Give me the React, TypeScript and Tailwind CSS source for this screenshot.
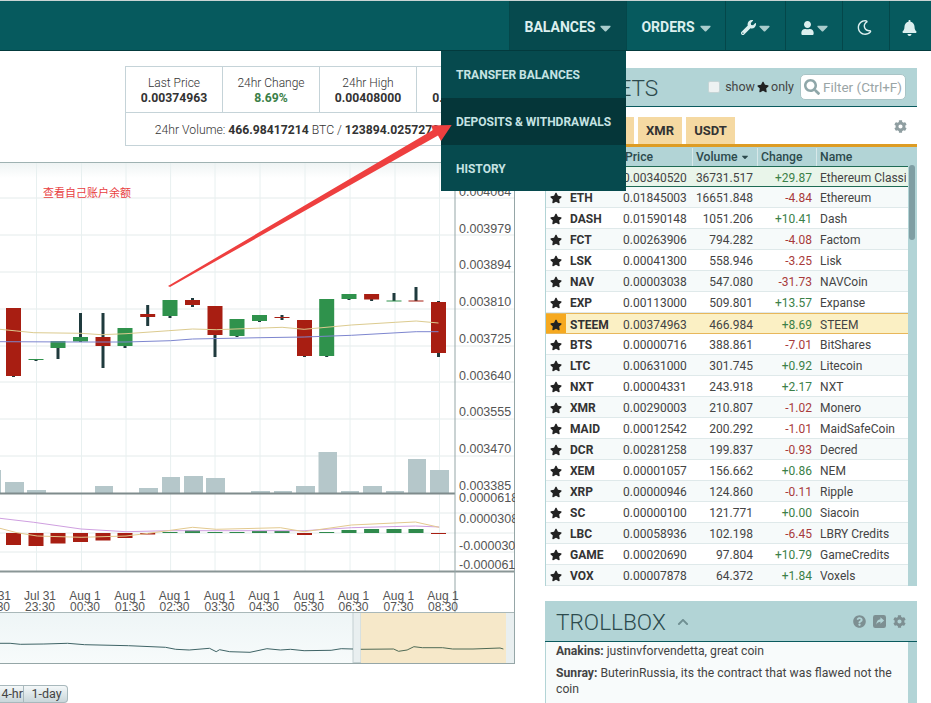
import React from "react";
import {
  FaBell,
  FaCaretDown,
  FaChevronUp,
  FaCog,
  FaQuestionCircle,
  FaRegMoon,
  FaSearch,
  FaStar,
  FaUser,
  FaWrench,
} from "react-icons/fa";

const markets = [
  ["ETC", "0.00340520", "36731.517", "+29.87", "Ethereum Classic"],
  ["ETH", "0.01845003", "16651.848", "-4.84", "Ethereum"],
  ["DASH", "0.01590148", "1051.206", "+10.41", "Dash"],
  ["FCT", "0.00263906", "794.282", "-4.08", "Factom"],
  ["LSK", "0.00041300", "558.946", "-3.25", "Lisk"],
  ["NAV", "0.00003038", "547.080", "-31.73", "NAVCoin"],
  ["EXP", "0.00113000", "509.801", "+13.57", "Expanse"],
  ["STEEM", "0.00374963", "466.984", "+8.69", "STEEM"],
  ["BTS", "0.00000716", "388.861", "-7.01", "BitShares"],
  ["LTC", "0.00631000", "301.745", "+0.92", "Litecoin"],
  ["NXT", "0.00004331", "243.918", "+2.17", "NXT"],
  ["XMR", "0.00290003", "210.807", "-1.02", "Monero"],
  ["MAID", "0.00012542", "200.292", "-1.01", "MaidSafeCoin"],
  ["DCR", "0.00281258", "199.837", "-0.93", "Decred"],
  ["XEM", "0.00001057", "156.662", "+0.86", "NEM"],
  ["XRP", "0.00000946", "124.860", "-0.11", "Ripple"],
  ["SC", "0.00000100", "121.771", "+0.00", "Siacoin"],
  ["LBC", "0.00058936", "102.198", "-6.45", "LBRY Credits"],
  ["GAME", "0.00020690", "97.804", "+10.79", "GameCredits"],
  ["VOX", "0.00007878", "64.372", "+1.84", "Voxels"],
];

// x, bodyTop, bodyBottom, wickTop, wickBottom, up
const candles: [number, number, number, number, number, boolean][] = [
  [13.5, 308, 376, 308, 377, false],
  [36, 359, 360, 359, 361, true],
  [58, 341, 348, 341, 359, true],
  [80.5, 337, 341.5, 313, 342, true],
  [103, 337, 346, 313, 368, false],
  [125, 328, 346, 328, 348, true],
  [147.7, 314, 317, 305, 326, false],
  [170, 300, 316, 300, 318, true],
  [192.5, 300, 305, 298, 307, false],
  [215, 306, 335, 306, 357, false],
  [237, 319, 336, 319, 337, true],
  [259.5, 315, 321, 315, 322, true],
  [282, 317, 318, 315, 320, false],
  [304.5, 320, 356, 320, 357, false],
  [326.7, 299, 356, 299, 357, true],
  [349, 294, 299, 294, 300, true],
  [371.6, 294, 299.5, 294, 301, false],
  [394, 300.5, 301.5, 293, 301, true],
  [416, 300.5, 301.5, 287, 301, false],
  [438.5, 302, 353, 301, 357, false],
];

// left, right, top
const volumes = [
  [-16, 1, 470],
  [5, 24, 482],
  [27, 46, 490],
  [95, 113, 486],
  [139, 158, 488],
  [162, 180, 477],
  [184, 203, 476],
  [206, 225, 478],
  [251, 270, 491],
  [274, 292, 491],
  [296, 315, 486],
  [318.5, 337, 452],
  [341, 359, 491],
  [363, 382, 486],
  [386, 404, 491],
  [408, 426, 459],
  [430, 449, 470],
];

// centre x, top, bottom, up
const macd: [number, number, number, boolean][] = [
  [13.5, 533, 545, false],
  [36, 533, 546, false],
  [58, 533, 543.5, false],
  [80.5, 533, 542, false],
  [103, 533, 540.5, false],
  [125, 533, 538, false],
  [147.7, 533, 534.5, false],
  [170, 532, 533, true],
  [192.5, 530, 533, true],
  [215, 532, 533, true],
  [237, 532, 533, true],
  [259.5, 531, 533, true],
  [282, 531, 533, true],
  [304.5, 533, 535, false],
  [326.7, 532, 533, true],
  [349, 530, 533, true],
  [371.6, 529, 533, true],
  [394, 529, 533, true],
  [416, 529, 533, true],
  [438.5, 533, 534, false],
];

const toChart = (pts: number[][], base: number) =>
  pts.map(([x, y]) => `${(x / 2.96).toFixed(1)},${(base + y / 3).toFixed(1)}`).join(" ");

const tanLine = toChart(
  [[0, 148], [50, 153], [100, 158], [240, 160], [300, 164], [373, 161], [500, 152], [570, 147], [640, 149], [835, 142], [900, 148], [1040, 135], [1170, 127], [1232, 123], [1298, 129]],
  280,
);
const blueLine = toChart(
  [[0, 185], [240, 186], [373, 186], [505, 182], [570, 177], [770, 173], [900, 171], [1040, 166], [1232, 155], [1298, 155]],
  280,
);
const macdPurple = toChart(
  [[0, 115], [100, 127], [240, 147], [373, 155], [500, 152], [900, 152], [1040, 143], [1230, 138], [1300, 141]],
  480,
);
const macdTan = toChart(
  [[0, 145], [50, 158], [110, 168], [240, 172], [373, 168], [440, 160], [570, 142], [640, 148], [830, 143], [900, 155], [1040, 135], [1230, 126], [1300, 142]],
  480,
);
const navLeft = toChart(
  [[0, 490], [30, 490], [60, 493], [130, 492], [200, 490], [250, 494], [380, 497], [490, 502], [520, 508], [560, 510], [620, 505], [640, 515], [650, 509], [680, 515], [740, 517], [790, 506], [830, 510], [860, 508], [900, 512], [980, 511], [1010, 506], [1045, 507]],
  480,
);
const navRight = toChart(
  [[1068, 508], [1165, 507], [1180, 514], [1205, 510], [1225, 500], [1250, 503], [1310, 503], [1340, 507], [1400, 507], [1480, 504], [1490, 507]],
  480,
);

const gridY = [198, 235, 272, 309, 346, 382, 419, 456, 513, 533, 552];
const gridX = [36.5, 81.5, 126, 170.6, 215, 260, 305, 350, 395, 439.5];
const priceLabels = ["0.004064", "0.003979", "0.003894", "0.003810", "0.003725", "0.003640", "0.003555", "0.003470", "0.003385"];
const timeLabels = [
  [-5, "Jul 31", "22:30"],
  [40, "Jul 31", "23:30"],
  [85, "Aug 1", "00:30"],
  [130, "Aug 1", "01:30"],
  [174.5, "Aug 1", "02:30"],
  [219.5, "Aug 1", "03:30"],
  [264, "Aug 1", "04:30"],
  [309, "Aug 1", "05:30"],
  [353.5, "Aug 1", "06:30"],
  [398.5, "Aug 1", "07:30"],
  [443, "Aug 1", "08:30"],
];

function Chart() {
  return (
    <svg width="515" height="502" viewBox="0 162 515 502" className="block">
      <defs>
        <linearGradient id="topFade" x1="0" y1="0" x2="0" y2="1">
          <stop offset="0" stopColor="#eef3f3" />
          <stop offset="1" stopColor="#ffffff" />
        </linearGradient>
        <linearGradient id="navBg" x1="0" y1="0" x2="0" y2="1">
          <stop offset="0" stopColor="#eef5f6" />
          <stop offset="1" stopColor="#f7fbfb" />
        </linearGradient>
      </defs>
      <rect x="0" y="162" width="455" height="16" fill="url(#topFade)" />
      {gridY.map((y) => (
        <line key={y} x1="0" x2="514" y1={y} y2={y} stroke="#e4ebeb" />
      ))}
      {gridX.map((x) => (
        <line key={x} x1={x} x2={x} y1="163" y2="572" stroke="#e8f0f0" />
      ))}
      <line x1="0" x2="514" y1="162.5" y2="162.5" stroke="#9fb2b2" />

      <text x="43" y="197" fontSize="11" fill="#e8403f" fontFamily="'Noto Sans CJK SC', sans-serif">
        查看自己账户余额
      </text>

      {volumes.map(([a, b, top]) => (
        <rect key={a} x={a} y={top} width={b - a} height={493 - top} fill="#b5c7ca" />
      ))}

      {candles.map(([x, top, bottom, wt, wb, up]) => (
        <g key={x}>
          <rect x={x - 1.5} y={wt} width="3" height={wb - wt} fill="#1f3a3d" />
          <rect x={x - 7.5} y={top} width="15" height={bottom - top} fill={up ? "#2f924c" : "#a81e12"} />
        </g>
      ))}
      <polyline points={tanLine} fill="none" stroke="#dccb8f" strokeWidth="1" />
      <polyline points={blueLine} fill="none" stroke="#7d86cf" strokeWidth="1" />

      {macd.map(([x, top, bottom, up]) => (
        <rect key={x} x={x - 7.5} y={top} width="15" height={bottom - top} fill={up ? "#2f8a4c" : "#a81e12"} />
      ))}
      <polyline points={macdPurple} fill="none" stroke="#cf9fe0" strokeWidth="1" />
      <polyline points={macdTan} fill="none" stroke="#e3c98f" strokeWidth="1" />

      <line x1="0" x2="455" y1="493.5" y2="493.5" stroke="#7f8b8c" strokeWidth="2" />
      <line x1="0" x2="514" y1="571.5" y2="571.5" stroke="#8a9696" strokeWidth="2" />
      <line x1="455" x2="455" y1="163" y2="612" stroke="#95a6a7" />
      <line x1="514.5" x2="514.5" y1="163" y2="664" stroke="#95a6a7" />

      <g fill="#555" fontSize="12.5" fontFamily="'Liberation Sans', sans-serif">
        {priceLabels.map((t, i) => (
          <text key={t} x="459" y={196 + i * 36.7}>
            {t}
          </text>
        ))}
        <text x="459" y="502">0.0000618</text>
        <text x="459" y="523">0.0000308</text>
        <text x="459" y="550">-0.000030</text>
        <text x="459" y="569">-0.000061</text>
      </g>

      <g fill="#555" fontSize="12" fontFamily="'Liberation Sans', sans-serif" textAnchor="middle">
        {timeLabels.map(([x, a, b]) => (
          <g key={b as string}>
            <text x={x as number} y="600">{a}</text>
            <text x={x as number} y="611">{b}</text>
          </g>
        ))}
      </g>

      <rect x="0" y="612" width="514" height="51" fill="url(#navBg)" />
      <rect x="353" y="612.5" width="8" height="50" fill="#e9eff0" stroke="#c4d0d1" />
      <rect x="361" y="613" width="145" height="50" fill="#f6e8c9" />
      <rect x="506" y="613" width="8" height="50" fill="#e9eff0" />
      <polyline points={navLeft} fill="none" stroke="#3f6466" strokeWidth="1" />
      <polyline points={navRight} fill="none" stroke="#4f6a55" strokeWidth="1" />
      <line x1="0" x2="514" y1="612.5" y2="612.5" stroke="#a9b8b9" />
      <line x1="0" x2="514" y1="663.5" y2="663.5" stroke="#95a6a7" />
    </svg>
  );
}

function Caret() {
  return <FaCaretDown className="h-[18px] w-[11px] text-[#a9cccc]" />;
}

function Stat({ label, value, color = "text-[#333]" }: any) {
  return (
    <div className="w-[97px] shrink-0 border-r border-[#c5d3d8] pt-[9px] text-center last:border-r-0">
      <div className="text-[12px] font-light leading-[14px] text-[#333]">{label}</div>
      <div className={`text-[12.2px] font-bold leading-[17px] ${color}`}>{value}</div>
    </div>
  );
}

function NavItem({ children, className = "" }: any) {
  return (
    <div className={`flex h-full items-center justify-center border-l border-[#04474a] pt-[4px] font-bold text-[#dcefef] ${className}`}>
      {children}
    </div>
  );
}

function MarketRow({ row, index }: any) {
  const [sym, price, vol, change, name] = row;
  const isSteem = sym === "STEEM";
  const isFirst = index === 0;
  const rowBg = isSteem
    ? "bg-[#fbf0c4] border-y border-[#e8b75a]"
    : isFirst
      ? "bg-[#e9f5ea] border-y border-[#1f6b55]"
      : index % 2 === 1
        ? "bg-[#f6fafa] border-b border-[#dfe9ea]"
        : "bg-white border-b border-[#dfe9ea]";
  return (
    <div className={`flex h-[21px] items-center text-[12px] text-[#444] ${rowBg}`}>
      <div className={`flex h-full w-[20px] items-center justify-center pr-[1px] pt-[2px] ${isSteem ? "bg-[#f6a91f]" : ""}`}>
        <FaStar className="h-[12px] w-[12px] text-[#222]" />
      </div>
      <div className="w-[57px] pl-[4px] pt-[2px] font-bold text-[#333]">{sym}</div>
      <div className="w-[66px] pt-[2px]">{price}</div>
      <div className="w-[64px] pt-[2px] text-right">{vol}</div>
      <div className={`w-[59px] pt-[2px] text-right ${change.startsWith("+") ? "text-[#3b8048]" : "text-[#a83a3a]"}`}>
        {change}
      </div>
      <div className="ml-[8px] mr-[2px] min-w-0 flex-1 overflow-hidden whitespace-nowrap pt-[2px]">{name}</div>
    </div>
  );
}

export default function App() {
  return (
    <div className="relative h-[703px] w-[931px] overflow-hidden bg-white font-['Roboto',sans-serif] text-[#333]">
      <header className="flex h-[51px] justify-end border-y border-t-[#c9d4d4] border-b-[#033a3d] bg-[#065a5e] text-[14px]">
        <NavItem className="w-[117px] gap-[5px] bg-[#064a4e]">
          BALANCES <Caret />
        </NavItem>
        <NavItem className="w-[99px] gap-[5px]">
          ORDERS <Caret />
        </NavItem>
        <NavItem className="w-[60px] gap-[3px]">
          <FaWrench className="h-[15px] w-[15px]" /> <Caret />
        </NavItem>
        <NavItem className="w-[57px] gap-[3px]">
          <FaUser className="h-[14px] w-[13px]" /> <Caret />
        </NavItem>
        <NavItem className="w-[47px] pr-[3px]">
          <FaRegMoon className="h-[15px] w-[15px]" />
        </NavItem>
        <NavItem className="w-[42px] pr-[3px]">
          <FaBell className="h-[16px] w-[15px]" />
        </NavItem>
      </header>

      <main className="flex">
        <section className="w-[515px] shrink-0">
          <div className="ml-[125px] mt-[15px] w-[389px] border border-[#c5d3d8]">
            <div className="flex h-[46px] border-b border-[#c5d3d8]">
              <Stat label="Last Price" value="0.00374963" />
              <Stat label="24hr Change" value="8.69%" color="text-[#3b8048]" />
              <Stat label="24hr High" value="0.00408000" />
              <Stat label="24hr Low" value="0.00346410" />
            </div>
            <div className="flex h-[32px] items-center justify-center whitespace-nowrap pl-[4px] pt-[3px] text-[12.2px] font-light">
              24hr Volume:&nbsp;<b className="font-bold">466.98417214</b>&nbsp;BTC /&nbsp;
              <b className="font-bold">123894.02572703</b>&nbsp;STEEM
            </div>
          </div>
          <div className="mt-[16px]">
            <Chart />
          </div>
          <div className="mt-[21px] flex h-[18px] w-[68px] overflow-hidden rounded-r-[4px] border border-[#a8b8bc] border-l-0 bg-gradient-to-b from-[#f4f8f9] to-[#c9d6da] text-[12.5px] leading-[16px] text-[#444]">
            <div className="w-[24px] shrink-0 border-r border-[#a8b8bc] text-right">4-hr</div>
            <div className="flex-1 pl-[2px] text-center">1-day</div>
          </div>
        </section>

        <aside className="ml-[30px] mt-[17px] w-[372px] shrink-0">
          <div className="bg-[#b2d4d6]">
            <div className="flex h-[39px] items-center border-b border-[#0a5a5e]">
              <h2 className="ml-[11px] pt-[3px] text-[22.6px] font-light text-[#2c4a4d]">MARKETS</h2>
              <label className="ml-auto flex items-center gap-[2px] text-[12.5px] text-[#444]">
                <span className="mr-[3px] h-[12px] w-[12px] rounded-[2px] border border-[#c5d5d6] bg-[#eef2f2]" />
                show <FaStar className="h-[12px] w-[12px] text-[#222]" /> only
              </label>
              <div className="ml-[6px] mr-[11px] flex h-[26px] w-[106px] items-center gap-[3px] rounded-[5px] border border-[#a9c4c6] bg-white pl-[3px] text-[13.5px] text-[#9aa5a6]">
                <FaSearch className="h-[16px] w-[16px] text-[#8fa7a9]" /> Filter (Ctrl+F)
              </div>
            </div>
            <div className="ml-px flex h-[40px] items-end gap-[4px] border-b-[3px] border-[#dd9c24] bg-white pl-[2px]">
              {["BTC", "ETH", "XMR", "USDT"].map((t) => (
                <div
                  key={t}
                  className={`flex h-[27px] items-center justify-center bg-[#f5d9a2] text-[13px] font-bold text-[#333] ${
                    t === "USDT" ? "w-[49px]" : t === "BTC" ? "w-[38px]" : "w-[44px]"
                  }`}
                >
                  {t}
                </div>
              ))}
              <FaCog className="mb-[11px] ml-auto mr-[10px] h-[13px] w-[13px] text-[#8f9ea1]" />
            </div>
            <div className="flex">
              <div className="ml-px w-[362px]">
                <div className="flex h-[19px] items-center pt-[1px] text-[12.2px] font-medium text-[#2c4a4d]">
                  <div className="w-[76px]" />
                  <div className="h-full w-[70px] pl-[3px] leading-[19px]">Price</div>
                  <div className="flex h-full w-[65px] items-center gap-[3px] border-l border-[#d7e8e9] pl-[3px]">
                    Volume <FaCaretDown className="h-[10px] w-[8px]" />
                  </div>
                  <div className="h-full w-[59px] border-l border-[#d7e8e9] pl-[3px] leading-[19px]">Change</div>
                  <div className="h-full flex-1 border-l border-[#d7e8e9] pl-[3px] leading-[19px]">Name</div>
                </div>
                {markets.map((row, i) => (
                  <MarketRow key={row[0]} row={row} index={i} />
                ))}
              </div>
              <div className="ml-px flex-1 pt-[18px]">
                <div className="h-[75px] w-[6px] rounded-[3px] bg-[#7f9ea3]" />
              </div>
            </div>
          </div>

          <div className="mt-[15px] bg-[#b2d4d6]">
            <div className="flex h-[41px] items-center border-b border-[#0a5a5e] pl-[11px] pr-[11px]">
              <h2 className="pt-[3px] text-[22.6px] font-light text-[#2c4a4d]">TROLLBOX</h2>
              <FaChevronUp className="ml-[11px] mt-[1px] h-[12px] w-[12px] text-[#6f8f92]" />
              <FaQuestionCircle className="ml-auto h-[13px] w-[13px] text-[#7d8f92]" />
              <svg viewBox="0 0 14 14" className="ml-[7px] h-[13px] w-[13px]">
                <rect width="14" height="14" rx="2.5" fill="#7d8f92" />
                <path d="M8 2.5 12 6 8 9.5V7.4C6 7.4 4.6 8.2 3.6 10.4 3.6 7 5.2 4.9 8 4.6Z" fill="#b2d4d6" />
              </svg>
              <FaCog className="ml-[7px] h-[13px] w-[13px] text-[#7d8f92]" />
            </div>
            <div className="ml-px w-[362px] bg-[#f8fbfb] px-[10px] text-[12.2px] leading-[16px] text-[#444]">
              <p className="pt-[1px]">
                <b className="font-bold">Anakins:</b> justinvforvendetta, great coin
              </p>
              <p className="mt-[6px] h-[60px]">
                <b className="font-bold">Sunray:</b> ButerinRussia, its the contract that was flawed not the coin
              </p>
            </div>
          </div>
        </aside>
      </main>

      <div className="absolute left-[441px] top-[51px] w-[185px] bg-[#064a4e] text-[12px] font-bold text-[#c5e3e3]">
        <div className="flex h-[47px] items-center pl-[15px]">TRANSFER BALANCES</div>
        <div className="flex h-[47px] items-center bg-[#053639] pl-[15px]">DEPOSITS &amp; WITHDRAWALS</div>
        <div className="flex h-[46px] items-center pl-[15px] pt-[2px]">HISTORY</div>
      </div>

      <svg className="absolute left-0 top-0" width="931" height="703" viewBox="0 0 931 703">
        <polygon points="168,286 433,130 431,125.5 451.7,125 441,141 438,135.5 170,287" fill="#ee3f3f" />
      </svg>
    </div>
  );
}
